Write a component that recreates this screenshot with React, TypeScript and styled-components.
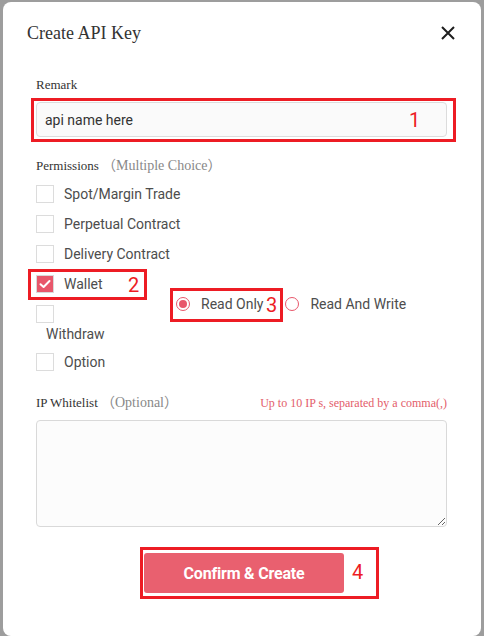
import React from "react";
import styled, { createGlobalStyle } from "styled-components";

const Global = createGlobalStyle`
  html, body { margin: 0; padding: 0; }
  body {
    background: #9d9d9d;
    width: 484px;
    height: 636px;
    overflow: hidden;
    font-family: Roboto, "Liberation Sans", sans-serif;
  }
`;

const Dialog = styled.div`
  position: relative;
  box-sizing: border-box;
  margin: 2px 0 0 3px;
  width: 478px;
  height: 634px;
  background: #fff;
  border-radius: 8px;
`;

const Header = styled.div`
  display: flex;
  justify-content: space-between;
  align-items: flex-start;
  padding: 21px 26px 0 24px;
`;

const Title = styled.h1`
  margin: 0;
  font-family: "Liberation Serif", serif;
  font-weight: 400;
  font-size: 18px;
  line-height: 20px;
  color: #333;
`;

const CloseButton = styled.button`
  margin-top: 3px;
  padding: 0;
  border: 0;
  background: none;
  width: 14px;
  height: 14px;
  display: block;
  cursor: pointer;
  svg { display: block; }
`;

const Body = styled.div`
  padding: 0 34px 0 33px;
`;

const Label = styled.div<{ $mt: number }>`
  margin-top: ${(p) => p.$mt}px;
  height: 15px;
  font-family: "Liberation Serif", "Noto Sans CJK SC", serif;
  font-size: 13px;
  line-height: 15px;
  color: #333;
  white-space: nowrap;
`;

const Muted = styled.span`
  color: #888;
  font-size: 14px;
`;

const LabelRow = styled.div`
  display: flex;
  justify-content: space-between;
  align-items: baseline;
  height: 15px;
  margin-top: 18px;
`;

const Hint = styled.span`
  font-family: "Liberation Serif", serif;
  font-size: 12px;
  line-height: 15px;
  color: #e35d6a;
`;

const TextInput = styled.input`
  box-sizing: border-box;
  display: block;
  margin-top: 10px;
  width: 100%;
  height: 35px;
  border: 1px solid #dcdcdc;
  border-radius: 4px;
  background: #fafafa;
  padding: 0 8px;
  font-family: Roboto, sans-serif;
  font-size: 14px;
  color: #333;
  outline: none;
`;

const TextArea = styled.textarea`
  box-sizing: border-box;
  display: block;
  margin-top: 10px;
  width: 100%;
  height: 107px;
  border: 1px solid #d9d9d9;
  border-radius: 4px;
  background: #fcfcfc;
  resize: vertical;
  outline: none;
  font-family: Roboto, sans-serif;
`;

const CheckList = styled.div`
  margin-top: 6px;
  display: flex;
  flex-direction: column;
`;

const CheckRow = styled.label`
  display: flex;
  align-items: center;
  gap: 10px;
  height: 30px;
  font-size: 14px;
  color: #4d4d4d;
`;

const Box = styled.span<{ $checked?: boolean }>`
  box-sizing: border-box;
  width: 18px;
  height: 18px;
  flex: none;
  border: 1px solid ${(p) => (p.$checked ? "#d9d9d9" : "#dcdcdc")};
  background: ${(p) => (p.$checked ? "#e8576b" : "#fff")};
  display: flex;
  align-items: center;
  justify-content: center;
`;

const WalletBlock = styled.div`
  display: flex;
  align-items: flex-start;
`;

const WalletColumn = styled.div`
  width: 140px;
  display: flex;
  flex-direction: column;
`;

const WithdrawBlock = styled.label`
  display: flex;
  flex-direction: column;
  align-items: flex-start;
  padding: 6px 0 3px;
  font-size: 14px;
  color: #4d4d4d;
`;

const WithdrawText = styled.span`
  padding-left: 10px;
  line-height: 20px;
  margin-top: 1px;
`;

const RadioGroup = styled.div`
  display: flex;
  align-items: center;
  margin-top: 25px;
  height: 20px;
`;

const RadioOption = styled.label`
  display: flex;
  align-items: center;
  gap: 11px;
  margin-right: 22px;
  font-size: 14px;
  color: #4d4d4d;
`;

const RadioCircle = styled.span<{ $checked?: boolean }>`
  box-sizing: border-box;
  width: 14px;
  height: 14px;
  border-radius: 50%;
  border: 1px solid #e8576b;
  display: flex;
  align-items: center;
  justify-content: center;
  &::after {
    content: "";
    display: ${(p) => (p.$checked ? "block" : "none")};
    width: 8px;
    height: 8px;
    border-radius: 50%;
    background: #e8576b;
  }
`;

const ButtonRow = styled.div`
  display: flex;
  justify-content: center;
  padding-left: 5px;
  margin-top: 26px;
`;

const PrimaryButton = styled.button`
  width: 200px;
  height: 40px;
  border: 0;
  border-radius: 3px;
  background: #e9606f;
  color: #fff;
  font-family: Roboto, sans-serif;
  font-weight: 700;
  font-size: 16px;
  letter-spacing: -0.2px;
  cursor: pointer;
`;

const Marker = styled.div<{ $l: number; $t: number; $w: number; $h: number }>`
  position: absolute;
  box-sizing: border-box;
  left: ${(p) => p.$l}px;
  top: ${(p) => p.$t}px;
  width: ${(p) => p.$w}px;
  height: ${(p) => p.$h}px;
  border: 3px solid #ed1c24;
  pointer-events: none;
`;

const MarkerNum = styled.span<{ $l: number; $t: number }>`
  position: absolute;
  left: ${(p) => p.$l}px;
  top: ${(p) => p.$t}px;
  font-family: Roboto, sans-serif;
  font-size: 20px;
  line-height: 20px;
  color: #ed1c24;
  pointer-events: none;
`;

const Check = () => (
  <svg width="12" height="10" viewBox="0 0 12 10">
    <path d="M1.5 5.2 L4.6 8 L10.5 2" fill="none" stroke="#fff" strokeWidth="2" strokeLinecap="round" strokeLinejoin="round" />
  </svg>
);

const perms = ["Spot/Margin Trade", "Perpetual Contract", "Delivery Contract"];

export default function App() {
  return (
    <>
      <Global />
      <Dialog>
        <Header>
          <Title>Create API Key</Title>
          <CloseButton aria-label="close">
            <svg width="14" height="14" viewBox="0 0 14 14">
              <path d="M1 1 L13 13 M13 1 L1 13" stroke="#1e1e1e" strokeWidth="2" />
            </svg>
          </CloseButton>
        </Header>
        <Body>
          <Label $mt={34}>Remark</Label>
          <TextInput defaultValue="api name here" />
          <Label $mt={21}>
            Permissions <Muted>（Multiple Choice）</Muted>
          </Label>
          <CheckList>
            {perms.map((p) => (
              <CheckRow key={p}>
                <Box />
                {p}
              </CheckRow>
            ))}
            <WalletBlock>
              <WalletColumn>
                <CheckRow>
                  <Box $checked>
                    <Check />
                  </Box>
                  Wallet
                </CheckRow>
                <WithdrawBlock>
                  <Box />
                  <WithdrawText>Withdraw</WithdrawText>
                </WithdrawBlock>
              </WalletColumn>
              <RadioGroup>
                <RadioOption>
                  <RadioCircle $checked />
                  Read Only
                </RadioOption>
                <RadioOption>
                  <RadioCircle />
                  Read And Write
                </RadioOption>
              </RadioGroup>
            </WalletBlock>
            <CheckRow>
              <Box />
              Option
            </CheckRow>
          </CheckList>
          <LabelRow>
            <Label $mt={0}>
              IP Whitelist <Muted>（Optional）</Muted>
            </Label>
            <Hint>Up to 10 IP s, separated by a comma(,)</Hint>
          </LabelRow>
          <TextArea />
          <ButtonRow>
            <PrimaryButton>Confirm &amp; Create</PrimaryButton>
          </ButtonRow>
        </Body>

        <Marker $l={28} $t={96} $w={425} $h={44} />
        <MarkerNum $l={406} $t={108}>1</MarkerNum>
        <Marker $l={25} $t={267} $w={119} $h={31} />
        <MarkerNum $l={125} $t={273}>2</MarkerNum>
        <Marker $l={167} $t={286} $w={113} $h={34} />
        <MarkerNum $l={263} $t={293}>3</MarkerNum>
        <Marker $l={137} $t={545} $w={239} $h={52} />
        <MarkerNum $l={349} $t={560}>4</MarkerNum>
      </Dialog>
    </>
  );
}
